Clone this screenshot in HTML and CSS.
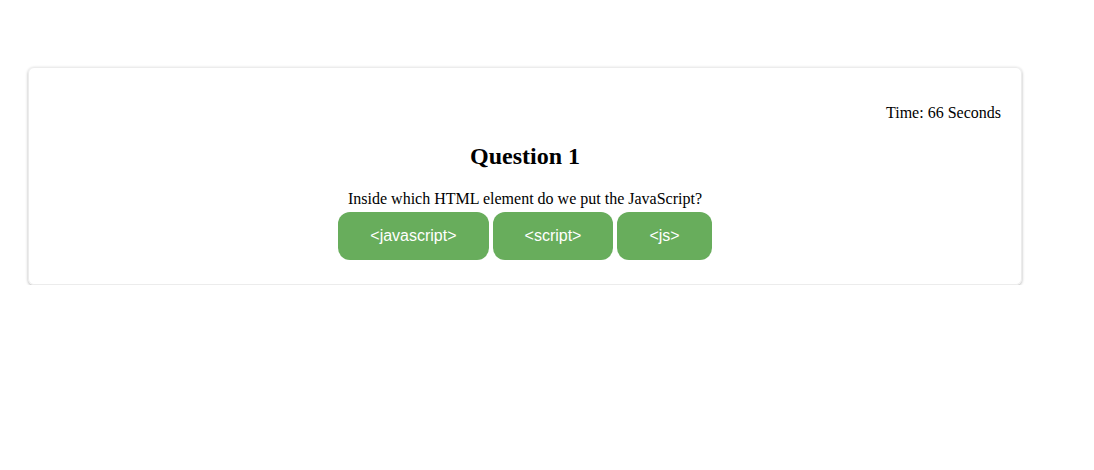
FILE: index.html
```html
<!DOCTYPE html>
<html>
<head>
<meta charset="utf-8">
<link rel="stylesheet" href="styles.css">
</head>
<body>
<div class="card">
  <p class="timer">Time: 66 Seconds</p>
  <h2 class="title">Question 1</h2>
  <div class="question">Inside which HTML element do we put the JavaScript?</div>
  <div class="answers">
    <button class="answer">&lt;javascript&gt;</button>
    <button class="answer">&lt;script&gt;</button>
    <button class="answer">&lt;js&gt;</button>
  </div>
</div>
</body>
</html>
```
FILE: styles.css
```css
html, body {
  margin: 0;
  padding: 0;
  background: #fff;
}
body {
  font-family: "Liberation Serif", "Times New Roman", serif;
  font-size: 16px;
  color: #000;
  padding: 67px 0 0 28px;
}
.card {
  box-sizing: border-box;
  width: 994px;
  padding: 20px 20px 24px;
  border: 1px solid #ececec;
  border-radius: 6px;
  box-shadow: 0 1px 3px rgba(0, 0, 0, 0.3);
  text-align: center;
}
.timer {
  margin: 16px 0 0;
  text-align: right;
}
.title {
  font-size: 24px;
  margin: 21px 0 20px;
}
.question {
  line-height: 18px;
}
.answers {
  padding-top: 4px;
}
.answer {
  font-family: "Liberation Sans", Arial, sans-serif;
  font-size: 16px;
  color: #fff;
  background: #68ad5c;
  border: none;
  border-radius: 12px;
  padding: 15px 32px;
  height: 48px;
  cursor: pointer;
}
```
